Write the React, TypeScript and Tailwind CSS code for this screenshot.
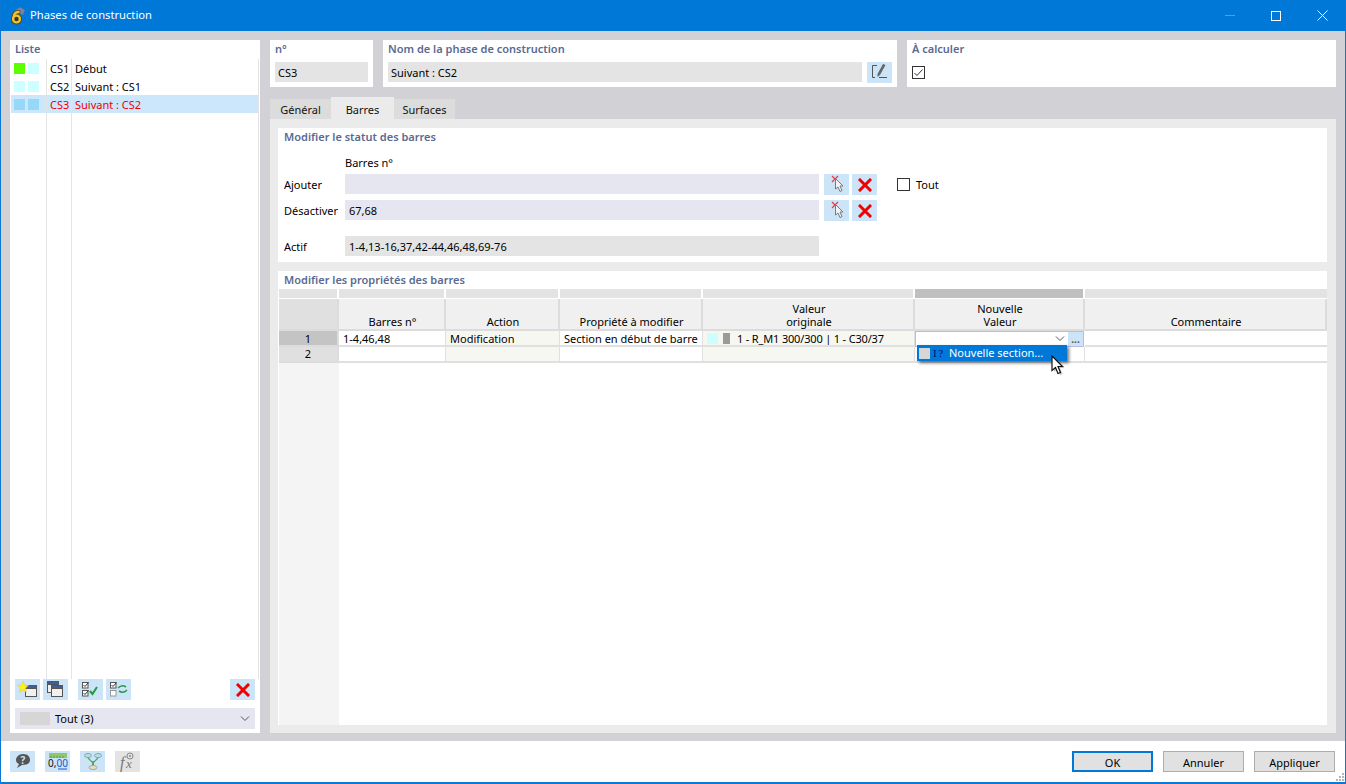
import React from "react";

const font = { fontFamily: '"Noto Sans", "Open Sans", sans-serif' };

function RedX({ s = 14 }: { s?: number }) {
  return (
    <svg width={s} height={s} viewBox="0 0 14 14">
      <path d="M2 2 L12 12 M12 2 L2 12" stroke="#f00000" strokeWidth="3" strokeLinecap="square" />
    </svg>
  );
}

function PickIcon() {
  return (
    <svg width="25" height="21" viewBox="0 0 25 21">
      <path d="M8 2 L14 8 M14 2 L8 8" stroke="#e0404a" strokeWidth="1.2" />
      <path d="M11.5 4.5 L11.5 15 L14 13 L16 17.5 L18 16.5 L16 12 L19 12 Z" fill="#f2f2f2" stroke="#7a7a7a" strokeWidth="1" />
    </svg>
  );
}

function IconBtn({ children, gray }: { children?: React.ReactNode; gray?: boolean }) {
  return (
    <div className={`w-[25px] h-[21px] flex items-center justify-center shrink-0 ${gray ? "bg-[#e3e3e3]" : "bg-[#cbe4f8]"}`}>
      {children}
    </div>
  );
}

function Win({ x, y }: { x: number; y: number }) {
  return (
    <g>
      <rect x={x + 0.5} y={y + 0.5} width="11" height="11" fill="#f0f0f0" stroke="#555" />
      <rect x={x + 0.5} y={y + 0.5} width="11" height="3" fill="#3a5f9a" stroke="#555" />
    </g>
  );
}

function CheckSmall({ x, y, on = true }: { x: number; y: number; on?: boolean }) {
  return (
    <g>
      <rect x={x + 0.5} y={y + 0.5} width="5.5" height="5.5" fill="#fff" stroke={on ? "#555" : "#999"} />
      {on && <path d={`M${x + 1.5} ${y + 3} L${x + 3} ${y + 4.5} L${x + 6.5} ${y + 0.5}`} fill="none" stroke="#333" strokeWidth="1" />}
    </g>
  );
}

function ListRow({ code, name, a, b, selected }: { code: string; name: string; a: string; b: string; selected?: boolean }) {
  return (
    <div className={`h-[18px] flex items-center ${selected ? "bg-[#cce6fb] text-[#f00000]" : "text-black"}`}>
      <div className="w-[35px] pl-[3px] flex gap-[3px] items-center shrink-0">
        <span className={`w-[11px] h-[11px] ${a}`} />
        <span className={`w-[11px] h-[11px] ${b}`} />
      </div>
      <div className="w-[25px] pl-[4px] pt-[2px] shrink-0">{code}</div>
      <div className="pl-[4px] pt-[2px]">{name}</div>
    </div>
  );
}

function CardTitle({ children }: { children: React.ReactNode }) {
  return <div className="font-semibold text-[#5a6a92] leading-[16px]">{children}</div>;
}

function Field({ children, cls }: { children?: React.ReactNode; cls: string }) {
  return <div className={`h-[20px] flex items-center pt-[2px] ${cls}`}>{children}</div>;
}

const head = "bg-[#f0f0f0] border-r-2 border-b-2 border-[#dcdcdc] flex items-end justify-center text-center leading-[13px] pb-[1px] pl-[2px]";
const top = "bg-[#e3e3e3] border-r-2 border-b border-white";
const cell = "border-r border-b-2 border-[#e0e0e0] flex items-center pl-[4px] whitespace-nowrap overflow-hidden";

export default function App() {
  return (
    <div style={font} className="w-[1346px] h-[784px] flex flex-col bg-white border border-[#0a78d4] border-t-0 text-[11px] text-black overflow-hidden relative">
      {/* Title bar */}
      <div className="h-[31px] bg-[#0078d7] flex items-center shrink-0 text-white">
        <div className="w-[29px] pl-[8px] flex items-center">
          <svg width="17" height="18" viewBox="0 0 17 18">
            <path d="M6 3 L11 0 L16 3 L14 8 L9 6 Z" fill="#6f86b0" stroke="#4a5f88" strokeWidth=".6" strokeDasharray="1 1" />
            <path d="M9.5 5 Q4.5 5 4.5 11.5" fill="none" stroke="#5a4708" strokeWidth="4.2" strokeLinecap="round" />
            <circle cx="7.5" cy="12" r="3.4" fill="none" stroke="#5a4708" strokeWidth="4.2" />
            <path d="M9.5 5 Q4.5 5 4.5 11.5" fill="none" stroke="#f1c232" strokeWidth="2.4" strokeLinecap="round" />
            <circle cx="7.5" cy="12" r="3.4" fill="#3a3a2a" stroke="#f1c232" strokeWidth="2.4" />
          </svg>
        </div>
        <div className="text-[11.2px] text-white flex-1">Phases de construction</div>
        <div className="w-[46px] flex justify-center">
          <div className="w-[10px] h-px bg-[#4da1e4]" />
        </div>
        <div className="w-[46px] flex justify-center">
          <div className="w-[10px] h-[10px] border border-white" />
        </div>
        <div className="w-[46px] flex justify-center">
          <svg width="11" height="11" viewBox="0 0 11 11"><path d="M.5 .5 L10.5 10.5 M10.5 .5 L.5 10.5" stroke="#fff" strokeWidth="1" /></svg>
        </div>
      </div>

      {/* Body */}
      <div className="flex-1 min-h-0 bg-[#d2d1d6] flex pl-[9px] pr-[9px] pt-[9px] pb-[8px] gap-[10px]">
        {/* List panel */}
        <div className="w-[250px] bg-white flex flex-col shrink-0">
          <div className="pl-[5px] h-[19px] flex items-center pb-[2px]"><CardTitle>Liste</CardTitle></div>
          <div className="flex-1 min-h-0 mx-px relative border-r border-[#e4e4e4]">
            <ListRow code="CS1" name="Début" a="bg-[#5cff00]" b="bg-[#ccffff]" />
            <ListRow code="CS2" name="Suivant : CS1" a="bg-[#ccffff]" b="bg-[#ccffff]" />
            <ListRow code="CS3" name="Suivant : CS2" a="bg-[#95d8f8]" b="bg-[#95d8f8]" selected />
            <div className="absolute left-[35px] top-0 bottom-0 w-px bg-[#e4e4e4]" />
            <div className="absolute left-[60px] top-0 bottom-0 w-px bg-[#e4e4e4]" />
          </div>
          <div className="h-[21px] mx-[5px] flex gap-[3px] items-center">
            <IconBtn>
              <svg width="25" height="21" viewBox="0 0 25 21">
                <Win x={10} y={6} />
                <path d="M8 2 L9.5 6 L13.5 6.5 L10.5 9 L11.5 13 L8 11 L4.5 13 L5.5 9 L2.5 6.5 L6.5 6 Z" fill="#ffee22" stroke="#e0d020" strokeWidth=".5" />
              </svg>
            </IconBtn>
            <IconBtn>
              <svg width="25" height="21" viewBox="0 0 25 21"><Win x={4} y={2} /><Win x={8} y={6} /></svg>
            </IconBtn>
            <div className="w-[4px]" />
            <IconBtn>
              <svg width="25" height="21" viewBox="0 0 25 21">
                <CheckSmall x={4} y={3} /><CheckSmall x={4} y={11} />
                <path d="M12 12 L14.5 15 L19 8" fill="none" stroke="#1f9d3a" strokeWidth="2" />
              </svg>
            </IconBtn>
            <IconBtn>
              <svg width="25" height="21" viewBox="0 0 25 21">
                <CheckSmall x={4} y={3} /><CheckSmall x={4} y={11} on={false} />
                <path d="M12 9 Q16 5 20 8 M21 11 Q17 15 13 12" fill="none" stroke="#2b9a4a" strokeWidth="1.6" />
              </svg>
            </IconBtn>
            <div className="flex-1" />
            <IconBtn><RedX /></IconBtn>
          </div>
          <div className="h-[21px] mx-[5px] mt-[8px] mb-[4px] bg-[#e6e6f0] flex items-center pl-[5px] pr-[4px]">
            <div className="w-[30px] h-[13px] bg-[#d6d6d6] mr-[5px]" />
            <div className="flex-1 pt-[2px]">Tout (3)</div>
            <svg width="10" height="6" viewBox="0 0 10 6" className="mr-[1px]"><path d="M1 .5 L5 4.5 L9 .5" fill="none" stroke="#555" strokeWidth="1" /></svg>
          </div>
        </div>

        {/* Right */}
        <div className="flex-1 min-w-0 flex flex-col">
          <div className="flex h-[47px] shrink-0">
            <div className="w-[103px] bg-white px-[5px] pt-[1px] mr-[10px]">
              <CardTitle>n°</CardTitle>
              <Field cls="bg-[#e4e4e4] mt-[5px] pl-[3px]">CS3</Field>
            </div>
            <div className="w-[514px] bg-white pl-[5px] pr-[5px] pt-[1px] mr-[10px]">
              <CardTitle>Nom de la phase de construction</CardTitle>
              <div className="flex mt-[5px] gap-[5px]">
                <Field cls="bg-[#e4e4e4] flex-1 pl-[3px]">Suivant : CS2</Field>
                <IconBtn>
                  <svg width="25" height="21" viewBox="0 0 25 21">
                    <path d="M10 3.5 H5.5 V15.5 H8 M12 15.5 H20" fill="none" stroke="#555" strokeWidth="1" />
                    <path d="M16 2 L18.5 3 L13 13 L10.5 15 L10.5 12 Z" fill="#666" />
                  </svg>
                </IconBtn>
              </div>
            </div>
            <div className="flex-1 bg-white px-[5px] pt-[1px]">
              <CardTitle>À calculer</CardTitle>
              <div className="mt-[9px] w-[13px] h-[13px] border border-[#333] flex items-center justify-center">
                <svg width="9" height="8" viewBox="0 0 9 8"><path d="M.5 4 L3 6.5 L8.5 .5" fill="none" stroke="#333" strokeWidth="1" /></svg>
              </div>
            </div>
          </div>

          {/* Tabs */}
          <div className="flex h-[22px] mt-[10px] items-end shrink-0 text-[#111]">
            <div className="w-[61px] h-[20px] pt-[3px] bg-[#dcdcdc] flex items-center justify-center">Général</div>
            <div className="w-[63px] h-[22px] pt-[5px] bg-[#ebebeb] flex items-center justify-center">Barres</div>
            <div className="w-[61px] h-[20px] pt-[3px] bg-[#dcdcdc] flex items-center justify-center">Surfaces</div>
          </div>

          <div className="flex-1 min-h-0 bg-[#ebebeb] pl-[8px] pr-[9px] pt-[9px] pb-[8px] flex flex-col gap-[9px]">
            <div className="h-[134px] bg-white shrink-0 pl-[6px] pt-[1px]">
              <CardTitle>Modifier le statut des barres</CardTitle>
              <div className="pl-[61px] mt-[10px] leading-[16px] h-[19px]">Barres n°</div>
              <div className="flex items-start h-[21px]">
                <div className="w-[61px] pt-[3px]">Ajouter</div>
                <Field cls="w-[474px] bg-[#e6e6f0] pl-[4px]"> </Field>
                <div className="w-[5px]" />
                <IconBtn><PickIcon /></IconBtn>
                <div className="w-[3px]" />
                <IconBtn><RedX /></IconBtn>
                <div className="w-[20px]" />
                <div className="w-[13px] h-[13px] border border-[#333] mr-[6px] mt-[4px]" />
                <div className="pt-[3px]">Tout</div>
              </div>
              <div className="flex items-start h-[21px] mt-[5px]">
                <div className="w-[61px] pt-[3px]">Désactiver</div>
                <Field cls="w-[474px] bg-[#e6e6f0] pl-[4px]">67,68</Field>
                <div className="w-[5px]" />
                <IconBtn><PickIcon /></IconBtn>
                <div className="w-[3px]" />
                <IconBtn><RedX /></IconBtn>
              </div>
              <div className="flex items-start h-[20px] mt-[15px]">
                <div className="w-[61px] pt-[3px]">Actif</div>
                <Field cls="w-[474px] bg-[#e4e4e4] pl-[4px]">1-4,13-16,37,42-44,46,48,69-76</Field>
              </div>
            </div>

            <div className="flex-1 min-h-0 bg-white flex flex-col">
              <div className="pl-[6px] pt-px h-[18px] shrink-0"><CardTitle>Modifier les propriétés des barres</CardTitle></div>
              <div className="flex-1 min-h-0 relative flex flex-col">
                <div className="grid grid-cols-[60px_107px_114px_143px_212px_170px_242px] grid-rows-[10px_32px_16px_16px] leading-none ml-px w-[1048px] shrink-0">
                  <div className={top} /><div className={top} /><div className={top} /><div className={top} />
                  <div className={top} />
                  <div className="bg-[#bfbfbf] border-r-2 border-b border-white" />
                  <div className="bg-[#e3e3e3] border-b border-white" />

                  <div className="bg-[#e0e0e0] border-r-2 border-b-2 border-[#dcdcdc]" />
                  <div className={head}>Barres n°</div>
                  <div className={head}>Action</div>
                  <div className={head}>Propriété à modifier</div>
                  <div className={head}>Valeur<br />originale</div>
                  <div className={head}>Nouvelle<br />Valeur</div>
                  <div className={head + " border-r-0"}>Commentaire</div>

                  <div className="bg-[#c4c4c4] flex items-center justify-center border-r-2 border-b-2 border-[#dcdcdc]">1</div>
                  <div className={cell}>1-4,46,48</div>
                  <div className={cell + " bg-[#f7f7f2]"}>Modification</div>
                  <div className={cell}>Section en début de barre</div>
                  <div className={cell + " bg-[#f7f7f2]"}>
                    <span className="w-[11px] h-[11px] bg-[#ccffff] mr-[5px]" />
                    <span className="w-[7px] h-[11px] bg-[#9a9a9a] mr-[7px]" />
                    <span className="tracking-[-0.17px]">1 - R_M1 300/300 | 1 - C30/37</span>
                  </div>
                  <div className="border border-[#b9b9e6] bg-white flex items-center justify-end mr-[1px]">
                    <svg width="10" height="6" viewBox="0 0 10 6" className="mr-[3px]"><path d="M1 .5 L5 4.5 L9 .5" fill="none" stroke="#555" strokeWidth="1" /></svg>
                    <div className="w-[15px] h-full bg-[#cbe4f8] flex items-end justify-center text-[#555] text-[10px] pb-[2px] leading-none font-bold">...</div>
                  </div>
                  <div className={cell + " border-r-0"} />

                  <div className="bg-[#e0e0e0] flex items-center justify-center border-r-2 border-b-2 border-[#dcdcdc] pb-[1px]">2</div>
                  <div className={cell} />
                  <div className={cell + " bg-[#f7f7f2]"} />
                  <div className={cell} />
                  <div className={cell + " bg-[#f7f7f2]"} />
                  <div className={cell} />
                  <div className={cell + " border-r-0"} />
                </div>
                <div className="flex-1 min-h-0 ml-px w-[60px] bg-[#f4f4f4]" />

                {/* Dropdown */}
                <div className="absolute left-[639px] top-[56px] w-[150px] h-[16px] bg-[#0078d7] text-white flex items-center pl-[2px] shadow-[2px_2px_3px_rgba(0,0,0,0.55)]">
                  <span className="w-[11px] h-[11px] bg-[#d6d6d6] mr-[3px]" />
                  <span className="w-[14px] text-[11px] text-[#0a0a70] leading-none tracking-[1.5px]" style={{ fontFamily: '"Liberation Serif", serif' }}>I?</span>
                  <span className="ml-[2px]">Nouvelle section...</span>
                </div>
                {/* Cursor */}
                <svg className="absolute left-[773px] top-[66px]" width="16" height="21" viewBox="0 0 16 21">
                  <path d="M3 3 L3 17 L6.5 14 L9 20 L11.5 19 L9 13 L13.5 13 Z" fill="#888" opacity=".5" />
                  <path d="M1 1 L1 15.5 L4.5 12.5 L7 18.5 L9.5 17.5 L7 11.5 L11.5 11.5 Z" fill="#fff" stroke="#111" strokeWidth="1.2" />
                </svg>
              </div>
            </div>
          </div>
        </div>
      </div>

      {/* Footer */}
      <div className="h-[42px] bg-white shrink-0 flex items-center pl-[9px] pr-[10px] pb-[1px] border-b border-[#0a78d4]">
        <div className="flex gap-[10px]">
          <IconBtn>
            <svg width="18" height="16" viewBox="0 0 18 16">
              <path d="M9 1 C14 1 16 4 16 7 C16 11 12 12 8 12 L3 15 L5 11 C3 10 2 9 2 7 C2 4 5 1 9 1 Z" fill="#555" />
              <text x="9" y="10.5" fontSize="10" fontWeight="bold" fill="#cbe4f8" textAnchor="middle">?</text>
            </svg>
          </IconBtn>
          <IconBtn>
            <svg width="22" height="19" viewBox="0 0 22 19">
              <rect x="2" y="1" width="18" height="5" fill="#8fc86a" />
              <path d="M4 4 V6 M7 4 V6 M10 4 V6 M13 4 V6 M16 4 V6" stroke="#5c9a3c" />
              <text x="11" y="15" fontSize="10" textAnchor="middle" fill="#111">0,<tspan fill="#2255cc">00</tspan></text>
              <path d="M11 17 H20" stroke="#2255cc" />
            </svg>
          </IconBtn>
          <IconBtn>
            <svg width="20" height="19" viewBox="0 0 20 19">
              <ellipse cx="5" cy="3.5" rx="3.5" ry="2" fill="#bde0e8" stroke="#7aa" />
              <ellipse cx="15" cy="3.5" rx="3.5" ry="2" fill="#bde0e8" stroke="#7aa" />
              <path d="M5 6 L10 11 L15 6" fill="none" stroke="#5aa06a" strokeWidth="1.2" />
              <rect x="9" y="9" width="2" height="5" fill="#5aa06a" />
              <ellipse cx="10" cy="15.5" rx="4" ry="2" fill="#e8e0b8" stroke="#aa9" />
            </svg>
          </IconBtn>
          <IconBtn gray>
            <svg width="25" height="21" viewBox="0 0 25 21">
              <text x="5" y="17" fontSize="16" fontStyle="italic" fill="#777" fontFamily="Liberation Serif, serif">f</text>
              <text x="11" y="17" fontSize="13" fontStyle="italic" fill="#777" fontFamily="Liberation Serif, serif">x</text>
              <circle cx="15" cy="5" r="3" fill="none" stroke="#888" />
              <circle cx="15" cy="5" r="1" fill="#888" />
            </svg>
          </IconBtn>
        </div>
        <div className="flex-1" />
        <div className="flex gap-[10px]">
          <div className="w-[81px] h-[21px] pt-[4px] bg-[#e1e1e1] border-2 border-[#0078d7] flex items-center justify-center">OK</div>
          <div className="w-[81px] h-[21px] pt-[5px] bg-[#e1e1e1] border border-[#adadad] flex items-center justify-center">Annuler</div>
          <div className="w-[81px] h-[21px] pt-[5px] bg-[#e1e1e1] border border-[#adadad] flex items-center justify-center">Appliquer</div>
        </div>
      </div>
      <svg className="absolute right-0 bottom-px" width="10" height="10" viewBox="0 0 10 10">
        <path d="M7 1 H9 V3 H7 Z M4 4 H6 V6 H4 Z M7 4 H9 V6 H7 Z M1 7 H3 V9 H1 Z M4 7 H6 V9 H4 Z M7 7 H9 V9 H7 Z" fill="#b5b5b5" />
      </svg>
    </div>
  );
}
